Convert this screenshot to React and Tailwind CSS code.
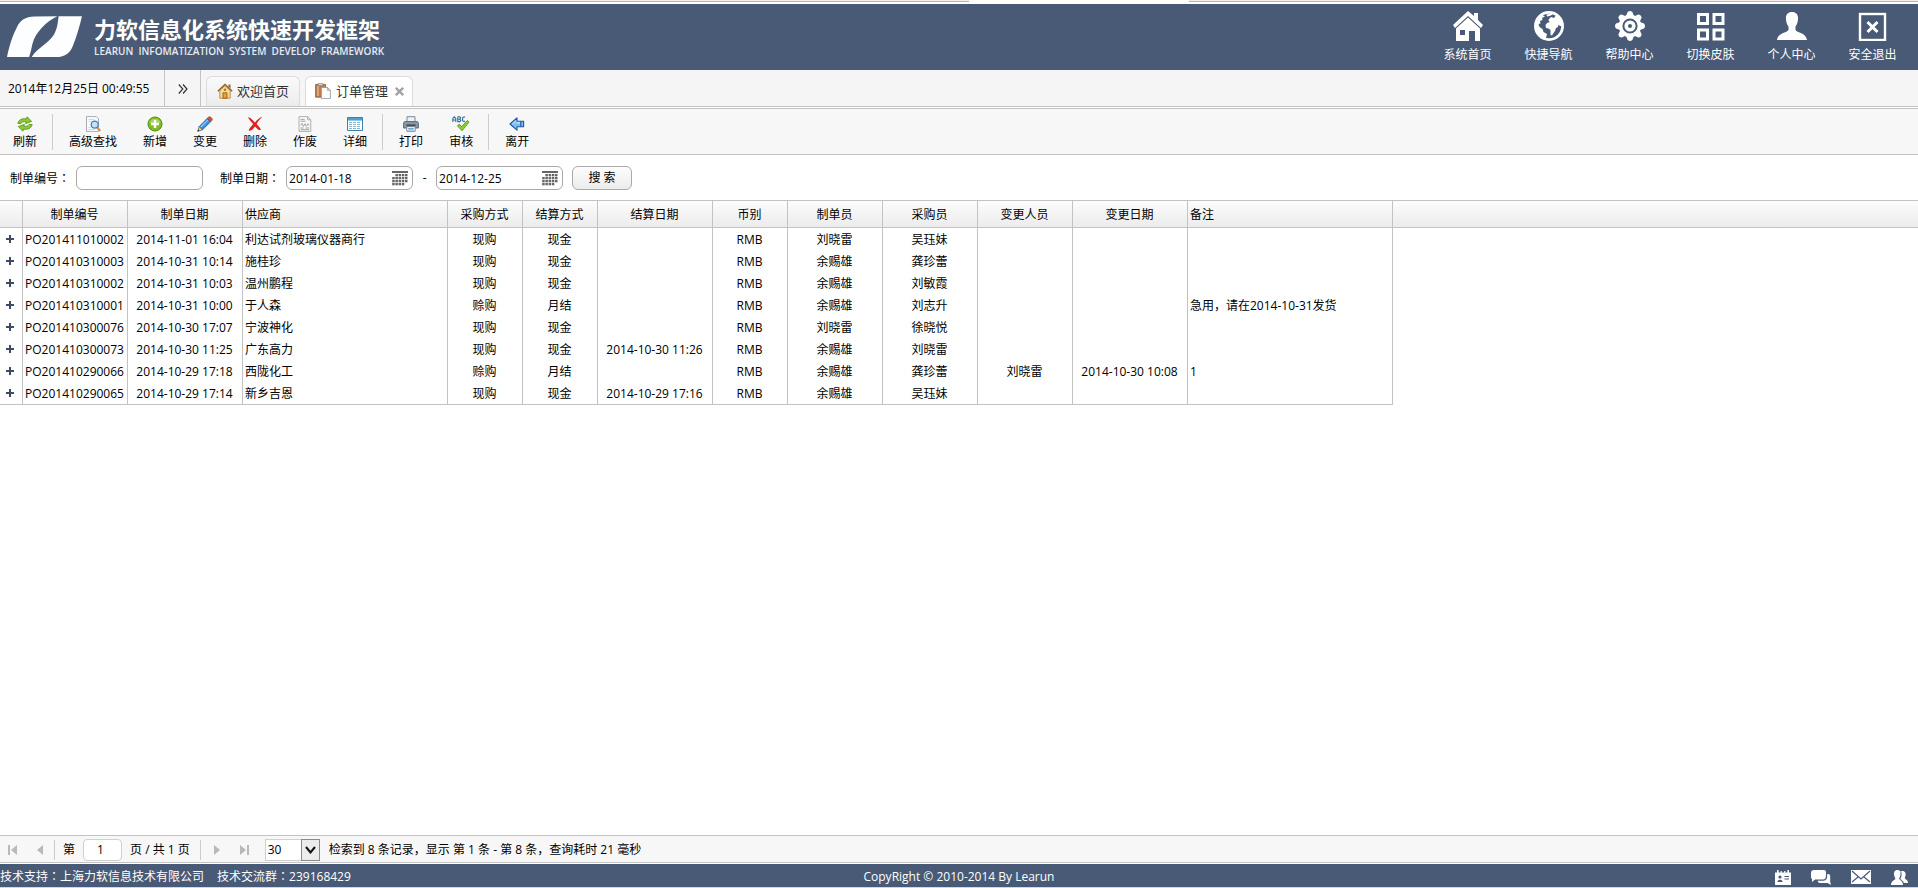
import React from "react";

/* ---------- header drawings ---------- */

const Logo = () => (
  <svg viewBox="0 0 224 124" className="h-[42px] w-[75px] shrink-0" aria-hidden="true">
    <path fill="#fdfeff" d="M0 122 C6 92 16 58 30 32 C40 12 54 2 82 1 L150 0 C118 16 86 46 76 82 C73 96 71 106 66 122 Z" />
    <path fill="#fdfeff" d="M224 0 L154 0 C152 20 150 40 138 58 C122 82 88 96 74 122 L146 122 C176 121 188 108 196 90 C208 62 216 32 224 0 Z" />
  </svg>
);

const HomeIcon = () => (
  <svg viewBox="0 0 30 30" className="h-[30px] w-[30px]" aria-hidden="true">
    <path fill="#fff" d="M15 0 L21 5 V2 H25 V9 L30 14 L28 17 L15 5 L2 17 L0 14 Z" />
    <path fill="#fff" d="M15 6.4 L27 17.5 V30 H22 V20 H16 V30 H3 V17.5 Z M7 19 V24 H12 V19 Z" fillRule="evenodd" />
  </svg>
);

const GlobeIcon = () => (
  <svg viewBox="0 0 30 30" className="h-[30px] w-[30px]" aria-hidden="true">
    <circle cx="15" cy="15" r="13.6" fill="#485a75" stroke="#fff" strokeWidth="2.8" />
    <path fill="#fff" d="M15 8 L17 6 L20 7 L22 4 L27 9 L28.5 15 L26 15 L24.5 13.5 L24 16 L22 17 L21 20 L19.5 22 L18 24.5 L16.5 24 L16.5 19 L14.5 17.5 L12 17 L11.5 14 L13 12 L16 11 L14.5 10 Z" />
    <path fill="#fff" d="M1.5 11 L5 5.5 L10 2 L9 4.5 L11 5.5 L8 7 L8.5 9 L6 10 L6.5 12.5 L4.5 13 L5.5 16 L8.5 18 L9.5 21 L13 23 L12 27 L8 27.5 L3 23 L1.2 17 Z" />
    <path fill="#fff" d="M12.5 3.5 L17 2.6 L19 3.6 L15.5 5 L13 5.4 Z" />
  </svg>
);

const GearIcon = () => (
  <svg viewBox="-15 -15 30 30" className="h-[30px] w-[30px]" aria-hidden="true">
    {[0, 45, 90, 135, 180, 225, 270, 315].map((a) => (
      <path key={a} fill="#fff" d="M-4.2 -9 L-2.4 -14 Q0 -16 2.4 -14 L4.2 -9 Z" transform={`rotate(${a})`} />
    ))}
    <circle r="11.2" fill="#fff" />
    <circle r="6.6" fill="none" stroke="#485a75" strokeWidth="2" />
    <circle r="2" fill="#485a75" />
  </svg>
);

const GridIcon = () => (
  <svg viewBox="0 0 30 30" className="h-[30px] w-[30px]" aria-hidden="true">
    <g fill="none" stroke="#fff" strokeWidth="3">
      <rect x="2.5" y="3.5" width="9" height="9" />
      <rect x="18" y="3.5" width="9" height="9" />
      <rect x="2.5" y="19" width="9" height="9" />
      <rect x="18" y="19" width="9" height="9" />
    </g>
  </svg>
);

const PersonIcon = () => (
  <svg viewBox="0 0 30 30" className="h-[30px] w-[30px]" aria-hidden="true">
    <path fill="#fff" d="M15 1 C19.5 1 21.5 4 21 8.5 C20.8 12 19.6 14 18.5 15.5 V19 C20 22 29 21.5 30 29 H0 C1 21.5 10 22 11.5 19 V15.5 C10.4 14 9.2 12 9 8.5 C8.5 4 10.5 1 15 1 Z" />
  </svg>
);

const ExitIcon = () => (
  <svg viewBox="0 0 30 30" className="h-[30px] w-[30px]" aria-hidden="true">
    <rect x="2" y="3" width="25" height="26" fill="none" stroke="#fff" strokeWidth="2.4" />
    <path d="M9.5 11 L19.5 21 M19.5 11 L9.5 21" stroke="#fff" strokeWidth="3" />
  </svg>
);

/* ---------- tab drawings ---------- */

const TabHome = () => (
  <svg viewBox="0 0 16 16" className="h-4 w-4" aria-hidden="true">
    <path fill="#a0622a" d="M11.5 1.5h2v4l-2-2z" />
    <path fill="#f6dc9c" stroke="#b0792c" strokeWidth=".8" d="M2.8 7.5 8 2.8l5.2 4.7v7.7H2.8z" />
    <path fill="none" stroke="#8a5a20" strokeWidth="1.3" d="M.8 8.2 8 1.4l7.2 6.8" />
    <path fill="#e8a23e" stroke="#8f4e12" strokeWidth=".8" d="M6 15.2V9.8h4v5.4z" />
    <circle cx="8" cy="6.8" r="1.2" fill="#c06d1e" />
  </svg>
);

const TabClipboard = () => (
  <svg viewBox="0 0 16 16" className="h-4 w-4" aria-hidden="true">
    <path fill="#bd7b4a" stroke="#8a5a38" strokeWidth=".8" d="M.6 1.4h10v12.8H.6z" />
    <path fill="#d9a57c" d="M2 3h2v10H2z" />
    <path fill="#d7dade" stroke="#7c7f85" strokeWidth=".6" d="M3.4.5h4.4v2H3.4z" />
    <path fill="#fdfdfe" stroke="#8d939c" strokeWidth=".8" d="M6.4 4.4h6l3 3v8.2h-9z" />
    <path fill="#d5dae1" stroke="#8d939c" strokeWidth=".6" d="M12.4 4.4v3h3z" />
  </svg>
);

/* ---------- toolbar drawings ---------- */

const ic = "h-4 w-4";

const Refresh = () => (
  <svg viewBox="0 0 16 16" className={ic} aria-hidden="true">
    <g fill="#8ccb2c" stroke="#4f8a12" strokeWidth=".8" strokeLinejoin="round">
      <path d="M.8 7.4C1.8 3.6 5.4 2 9.4 3L10.2.8 14.6 5.4 8.6 7.6 9.1 5.8C6.6 5.2 4.8 5.8 4 7.6Z" />
      <path d="M15.2 8.6C14.2 12.4 10.6 14 6.6 13L5.8 15.2 1.4 10.6 7.4 8.4 6.9 10.2C9.4 10.8 11.2 10.2 12 8.4Z" />
    </g>
  </svg>
);

const Find = () => (
  <svg viewBox="0 0 16 16" className={ic} aria-hidden="true">
    <path fill="#fbfcfe" stroke="#9aa4b2" strokeWidth=".9" d="M1.5.6h9.8l2.2 2.2v12.6h-12z" />
    <path stroke="#c9d0da" strokeWidth=".8" d="M3.5 3.5h6M3.5 5.5h3M3.5 11.5h3M3.5 13.4h6" />
    <path stroke="#d59654" strokeWidth="2.4" strokeLinecap="round" d="M12.4 11.8l2.2 2.4" />
    <circle cx="9.7" cy="8.6" r="3.5" fill="#c3e4f8" stroke="#3d7fb8" strokeWidth="1.3" />
  </svg>
);

const Add = () => (
  <svg viewBox="0 0 16 16" className={ic} aria-hidden="true">
    <circle cx="8" cy="8" r="7" fill="#7fbd25" stroke="#4d8a14" strokeWidth="1" />
    <path d="M2.4 7a5.7 5.2 0 0 1 11.2 0z" fill="#a5d65a" />
    <path stroke="#fff" strokeWidth="2.4" d="M8 4v8M4 8h8" />
  </svg>
);

const Edit = () => (
  <svg viewBox="0 0 16 16" className={ic} aria-hidden="true">
    <path fill="#3d8fdb" stroke="#1f5795" strokeWidth=".8" d="M2.2 10.6 10.2 2.4 13.6 5.8 5.4 13.8Z" />
    <path stroke="#9bcdf6" strokeWidth="1.1" d="M3.8 11 11 3.8" />
    <path fill="#d0533c" stroke="#8e3324" strokeWidth=".7" d="M11.4 1.3Q12.6.1 13.8 1.3L14.8 2.3Q15.8 3.4 14.8 4.6L13.6 5.8 10.2 2.4Z" />
    <path fill="#f1d3a4" stroke="#4a4a4a" strokeWidth=".7" d="M2.2 10.6.7 15.3 5.4 13.8Z" />
    <path fill="#222" d="M1.2 13.6.6 15.4l1.9-.6z" />
  </svg>
);

const Delete = () => (
  <svg viewBox="0 0 16 16" className={ic} aria-hidden="true">
    <path fill="#dd2222" d="M1 1.2C3.4 1 5.8 4.4 8 6.4 10 4 12.6 1.4 15.4.8 12.8 3 11 5.4 9.6 8 11.4 10 13.4 12 14 13.8 12 15 10 12.6 8 10.4 6 13 4.4 15 2 14.8 1 13.6 4 10.6 6.2 8 4.4 6 2 3.4 1 1.2Z" />
  </svg>
);

const Void = () => (
  <svg viewBox="0 0 16 16" className={ic} aria-hidden="true">
    <path fill="#f7f7f7" stroke="#a8a8a8" strokeWidth=".9" d="M2 .6h8.6l3.2 3.2v11.6H2z" />
    <path fill="none" stroke="#a8a8a8" strokeWidth=".9" d="M10.6.6v3.2h3.2" />
    <path fill="none" stroke="#9b9b9b" strokeWidth=".9" d="M3.6 3.4h4M3.6 5.2h5M3.4 9.4l1.6-2 1.4 3 1.6-2.6 1.5 2.4 1.5-2.4 1.4 1.4M3.6 12h3M8.6 12h3.6M3.6 13.7h8.6" />
  </svg>
);

const Detail = () => (
  <svg viewBox="0 0 16 16" className={ic} aria-hidden="true">
    <path fill="#fff" stroke="#3c7fae" strokeWidth="1" d="M.5 1.5h15v13H.5z" />
    <path fill="#4d9fd2" d="M1 2h14v2.6H1z" />
    <path stroke="#8fb4cd" strokeWidth="1" strokeDasharray="3 1" d="M2 6.5h12M2 8.5h12M2 10.5h12M2 12.5h12" />
  </svg>
);

const Print = () => (
  <svg viewBox="0 0 16 16" className={ic} aria-hidden="true">
    <path fill="#e9f1fa" stroke="#6f7d8c" strokeWidth=".9" d="M4 .7h8v5.6H4z" />
    <path fill="#8b97a4" stroke="#56616d" strokeWidth=".9" d="M1.6 5.6h12.8l1 1.4v5H.6V7z" />
    <path fill="#444e59" d="M3.4 8.4h9.2v1.6H3.4z" />
    <path fill="#fff" stroke="#6f7d8c" strokeWidth=".9" d="M3.8 10.6h8.4v4.7H3.8z" />
    <path stroke="#5da0dc" strokeWidth="1" d="M5.2 12.4h5.6M5.2 13.9h5.6" />
  </svg>
);

const Audit = () => (
  <svg viewBox="0 0 18 16" className="h-4 w-[18px]" aria-hidden="true">
    <g fill="none" stroke="#2f6f9f" strokeWidth="1.1">
      <path d="M.8 6V2.4L2.3.8l1.5 1.6V6M.8 4h3" />
      <path d="M5.8.8h2l.8 1-.8 1.4h-2V.8V5.6h2.2l.8-1.2-1-1.2" />
      <path d="M13 1.3 12 .8l-1.4.9v3l1.4.9 1-.5" />
    </g>
    <path fill="#8fce2e" stroke="#4f8a12" strokeWidth=".8" strokeLinejoin="round" d="M5.4 9.8 7.2 8.2 9.8 10.6 15.4 4.4 17 6 10 14.8Z" />
  </svg>
);

const Leave = () => (
  <svg viewBox="0 0 16 16" className={ic} aria-hidden="true">
    <path fill="#7fbdf5" stroke="#1f55a8" strokeWidth="1.1" strokeLinejoin="round" d="M1 8 8 1.8V5.2H14.6V10.8H8V14.2Z" />
    <path stroke="#e0f0fd" strokeWidth="1" d="M3.4 8 7 4.8M7.4 6.8h3.6" />
    <path stroke="#1f55a8" strokeWidth="1.1" d="M11.8 5.2v5.6" />
  </svg>
);

const CalendarGrid = () => (
  <svg viewBox="0 0 16 15" className="h-[15px] w-4" aria-hidden="true">
    <path fill="#666" d="M0 0h16v2H0z" />
    {[3, 6, 9, 12].map((y, r) =>
      [0.2, 3.4, 6.6, 9.8, 13].map((x, c) =>
        (r === 0 && c === 0) || (r === 3 && c === 4) ? null : (
          <rect key={`${x}-${y}`} x={x} y={y} width="2.5" height="2.3" fill="#666" />
        )
      )
    )}
  </svg>
);

/* ---------- data ---------- */

const NAV = [
  ["系统首页", HomeIcon],
  ["快捷导航", GlobeIcon],
  ["帮助中心", GearIcon],
  ["切换皮肤", GridIcon],
  ["个人中心", PersonIcon],
  ["安全退出", ExitIcon],
];

const TOOLS = [
  [["刷新", Refresh]],
  [["高级查找", Find], ["新增", Add], ["变更", Edit], ["删除", Delete], ["作废", Void], ["详细", Detail]],
  [["打印", Print], ["审核", Audit]],
  [["离开", Leave]],
];

const COLUMNS = [
  { title: "制单编号", col: "w-[105px]" },
  { title: "制单日期", col: "w-[115px]" },
  { title: "供应商", col: "w-[205px]", left: true },
  { title: "采购方式", col: "w-[75px]" },
  { title: "结算方式", col: "w-[75px]" },
  { title: "结算日期", col: "w-[115px]" },
  { title: "币别", col: "w-[75px]" },
  { title: "制单员", col: "w-[95px]" },
  { title: "采购员", col: "w-[95px]" },
  { title: "变更人员", col: "w-[95px]" },
  { title: "变更日期", col: "w-[115px]" },
  { title: "备注", col: "w-[205px]", left: true },
];

const ROWS = [
  ["PO201411010002", "2014-11-01 16:04", "利达试剂玻璃仪器商行", "现购", "现金", "", "RMB", "刘晓雷", "吴珏妹", "", "", ""],
  ["PO201410310003", "2014-10-31 10:14", "施桂珍", "现购", "现金", "", "RMB", "余赐雄", "龚珍蕾", "", "", ""],
  ["PO201410310002", "2014-10-31 10:03", "温州鹏程", "现购", "现金", "", "RMB", "余赐雄", "刘敏霞", "", "", ""],
  ["PO201410310001", "2014-10-31 10:00", "于人森", "赊购", "月结", "", "RMB", "余赐雄", "刘志升", "", "", "急用，请在2014-10-31发货"],
  ["PO201410300076", "2014-10-30 17:07", "宁波神化", "现购", "现金", "", "RMB", "刘晓雷", "徐晓悦", "", "", ""],
  ["PO201410300073", "2014-10-30 11:25", "广东高力", "现购", "现金", "2014-10-30 11:26", "RMB", "余赐雄", "刘晓雷", "", "", ""],
  ["PO201410290066", "2014-10-29 17:18", "西陇化工", "赊购", "月结", "", "RMB", "余赐雄", "龚珍蕾", "刘晓雷", "2014-10-30 10:08", "1"],
  ["PO201410290065", "2014-10-29 17:14", "新乡吉恩", "现购", "现金", "2014-10-29 17:16", "RMB", "余赐雄", "吴珏妹", "", "", ""],
];

/* ---------- parts ---------- */

/* Full-width colon centred in its box. */
const Colon = () => <span className="font-['Noto_Sans_CJK_TC',sans-serif]">：</span>;

function BrowserStrip() {
  return (
    <div className="flex h-1 shrink-0 bg-white" aria-hidden="true">
      <div className="h-0.5 flex-1 border-b border-[#b9b3b1] bg-[#f4eeee]" />
      <div className="w-[220px]" />
      <div className="h-0.5 w-[729px] border-b border-[#b9b3b1] bg-[#f4eeee]" />
    </div>
  );
}

function Header() {
  return (
    <header className="flex h-[66px] shrink-0 items-center justify-between bg-[#485a75] pr-[5px] pl-[7px] text-white">
      <div className="flex items-center gap-3">
        <Logo />
        <div className="pb-[3px]">
          <h1 className="text-[22px] leading-[30px] font-bold">力软信息化系统快速开发框架</h1>
          <p className="text-[10px] leading-[14px] font-semibold whitespace-pre text-[#e6ebf2]">
            {"LEARUN  INFOMATIZATION  SYSTEM  DEVELOP  FRAMEWORK"}
          </p>
        </div>
      </div>
      <nav className="flex">
        {NAV.map(([label, Icon]) => (
          <a key={label} href="#" className="flex w-[81px] flex-col items-center gap-[5px]">
            <Icon />
            <span className="leading-[18px]">{label}</span>
          </a>
        ))}
      </nav>
    </header>
  );
}

function TabBar() {
  return (
    <div className="flex h-[37px] shrink-0 items-stretch border-b border-[#c3c3c3] bg-[#f5f5f5]">
      <time className="flex w-[165px] items-center border-r border-[#c3c3c3] pt-[2px] pl-2">2014年12月25日 00:49:55</time>
      <button type="button" aria-label="展开" className="flex w-9 items-center justify-center border-r border-[#c3c3c3] pt-[2px]">
        <svg viewBox="0 0 10 10" className="h-[10px] w-[10px]" fill="none" stroke="#333" strokeWidth="1.2" aria-hidden="true">
          <path d="M.8.5 4.8 5 .8 9.5M5 .5 9 5 5 9.5" />
        </svg>
      </button>
      <div className="flex items-end gap-[5px] pl-[5px] text-[13px] text-[#333]">
        <button type="button" className="flex h-[30px] items-center gap-1 rounded-t-md border border-b-0 border-[#dcdcdc] bg-linear-to-b from-[#fafafa] to-[#ececec] px-[10px] pb-px">
          <TabHome />
          欢迎首页
        </button>
        <div className="flex h-[30px] items-center gap-[7px] rounded-t-md border border-b-0 border-[#dcdcdc] bg-white pr-2 pb-px pl-[9px]">
          <button type="button" className="flex items-center gap-[5px]">
            <TabClipboard />
            订单管理
          </button>
          <button type="button" aria-label="关闭">
            <svg viewBox="0 0 9 9" className="h-[9px] w-[9px]" stroke="#a3a3a3" strokeWidth="2.4" aria-hidden="true">
              <path d="M.8.8 8.2 8.2M8.2.8.8 8.2" />
            </svg>
          </button>
        </div>
      </div>
    </div>
  );
}

function Toolbar() {
  return (
    <div className="mt-px flex h-[47px] shrink-0 items-center border-y border-[#c3c3c3] bg-[#f7f7f7]">
      {TOOLS.map((group, g) => (
        <React.Fragment key={g}>
          {g > 0 && <div className="mr-[3px] ml-0.5 h-9 w-px bg-[#cccccc]" />}
          {group.map(([label, Icon]) => (
            <button key={label} type="button" className="flex flex-col items-center px-[13px] pt-1">
              <Icon />
              <span className="leading-5">{label}</span>
            </button>
          ))}
        </React.Fragment>
      ))}
    </div>
  );
}

const fieldBox = "flex h-6 w-[127px] items-center rounded-md border border-[#a9a9a9] bg-white";

function DateField({ id, label, value }) {
  return (
    <div className={fieldBox}>
      <input id={id} type="text" aria-label={label} defaultValue={value} className="h-full min-w-0 flex-1 rounded-md pl-[2px] outline-none" />
      <button type="button" aria-label="选择日期" className="pr-1">
        <CalendarGrid />
      </button>
    </div>
  );
}

function SearchBar() {
  return (
    <form className="flex h-[45px] shrink-0 items-center pt-px pl-[10px]" onSubmit={(e) => e.preventDefault()}>
      <label htmlFor="order-no" className="mr-[6px]">制单编号<Colon /></label>
      <div className={fieldBox}>
        <input id="order-no" type="text" className="h-full w-full rounded-md px-1 outline-none" />
      </div>
      <label htmlFor="date-from" className="mr-[6px] ml-[17px]">制单日期<Colon /></label>
      <DateField id="date-from" label="制单日期起" value="2014-01-18" />
      <span className="w-[23px] text-center">-</span>
      <DateField id="date-to" label="制单日期止" value="2014-12-25" />
      <button type="submit" className="ml-[9px] h-6 w-[60px] rounded-md border border-[#a9a9a9] bg-linear-to-b from-[#fdfdfd] to-[#ececec]">
        搜 索
      </button>
    </form>
  );
}

function OrdersTable() {
  return (
    <table className="w-full table-fixed border-separate border-spacing-0">
      <colgroup>
        <col className="w-[23px]" />
        {COLUMNS.map((c) => (
          <col key={c.title} className={c.col} />
        ))}
        <col />
      </colgroup>
      <thead>
        <tr className="h-7 bg-linear-to-b from-[#fdfdfd] to-[#ebebeb]">
          <th className="border-y border-r border-[#c3c3c3] p-0" aria-label="展开" />
          {COLUMNS.map((c) => (
            <th
              key={c.title}
              scope="col"
              className={`border-y border-r border-[#c3c3c3] pt-[2px] font-normal ${c.left ? "pl-[2px] text-left" : "pr-px text-center"}`}
            >
              {c.title}
            </th>
          ))}
          <th className="border-y border-[#c3c3c3] p-0" aria-hidden="true" />
        </tr>
      </thead>
      <tbody>
        {ROWS.map((row, r) => {
          const last = r === ROWS.length - 1;
          const edge = last ? "border-b" : "";
          return (
            <tr key={row[0]} className={last ? "h-[23px]" : "h-[22px]"}>
              <td className={`border-r border-[#c3c3c3] p-0 ${edge}`}>
                <button type="button" aria-label="展开明细" className="flex w-5 justify-center">
                  <svg viewBox="0 0 8 8" className="h-2 w-2" stroke="#3d4b66" strokeWidth="2" aria-hidden="true">
                    <path d="M4 0V8M0 4H8" />
                  </svg>
                </button>
              </td>
              {row.map((cell, i) => (
                <td
                  key={i}
                  className={`overflow-hidden border-r border-[#c3c3c3] pt-[2px] whitespace-nowrap ${edge} ${
                    COLUMNS[i].left ? "pl-[2px] text-left" : "pr-px text-center"
                  }`}
                >
                  {cell}
                </td>
              ))}
              <td className="p-0" />
            </tr>
          );
        })}
      </tbody>
    </table>
  );
}

function PageArrow({ label, flip, edge }) {
  return (
    <button type="button" aria-label={label} disabled className="flex w-[26px] justify-center">
      <svg viewBox="0 0 10 10" className={`h-[10px] w-[10px] ${flip ? "rotate-180" : ""}`} fill="#b9b9b9" aria-hidden="true">
        {edge && <path d="M0 0h2v10H0z" />}
        <path d="M9 0v10L3 5z" />
      </svg>
    </button>
  );
}

function Pager() {
  return (
    <div className="flex h-7 shrink-0 items-center border-y border-[#c3c3c3] bg-[#f7f7f7] pt-px">
      <PageArrow label="首页" edge />
      <PageArrow label="上一页" />
      <div className="mr-2 ml-0.5 h-5 w-px bg-[#cccccc]" />
      <label htmlFor="page-no">第</label>
      <input id="page-no" type="text" defaultValue="1" className="mx-2 h-[22px] w-[39px] rounded border border-[#d0d0d0] bg-white pr-2 pl-1 text-center outline-none" />
      <span>页 / 共 1 页</span>
      <div className="mr-1 ml-[10px] h-5 w-px bg-[#cccccc]" />
      <PageArrow label="下一页" flip />
      <PageArrow label="末页" flip edge />
      <div className="relative ml-2 h-[22px] w-[55px]">
        <select aria-label="每页条数" defaultValue="30" className="h-full w-full appearance-none border border-[#d0d0d0] bg-white pl-[2px] outline-none">
          <option>30</option>
          <option>50</option>
          <option>100</option>
        </select>
        <span className="pointer-events-none absolute top-0 right-0 flex h-[22px] w-[19px] items-center justify-center border border-[#8a8a8a] bg-[#ececec]">
          <svg viewBox="0 0 11 8" className="h-2 w-[11px]" fill="none" stroke="#111" strokeWidth="2" aria-hidden="true">
            <path d="M1 1 5.5 6.5 10 1" />
          </svg>
        </span>
      </div>
      <p className="pl-[9px]">检索到 8 条记录，显示 第 1 条 - 第 8 条，查询耗时 21 毫秒</p>
    </div>
  );
}

function Footer() {
  return (
    <footer className="mt-px grid h-[23px] shrink-0 grid-cols-3 items-center bg-[#485a75] pt-[2px] text-white">
      <p className="flex gap-[13px]">
        <span>技术支持<Colon />上海力软信息技术有限公司</span>
        <span>技术交流群<Colon />239168429</span>
      </p>
      <p className="text-center">CopyRight © 2010-2014 By Learun</p>
      <div className="flex items-center justify-end gap-5 pt-px pr-[10px]">
        <a href="#" aria-label="名片">
          <svg viewBox="0 0 16 15" className="h-[15px] w-4" aria-hidden="true">
            <path fill="#fff" d="M0 2.5h2V0h1.6v2.5h2V1h1.2v1.5h2.4V1h1.2v1.5h2V0H14v2.5h2V15H0z" />
            <circle cx="5" cy="7" r="1.6" fill="#485a75" />
            <path fill="#485a75" d="M2.4 12c0-3 5.2-3 5.2 0zM9.5 6h4.5v1H9.5zM9.5 8.5h4.5v1H9.5z" />
          </svg>
        </a>
        <a href="#" aria-label="会话">
          <svg viewBox="0 0 20 16" className="h-4 w-5" aria-hidden="true">
            <path fill="#fff" d="M3 1h10q2 0 2 2v3q0 4.600-3 4.600H4L1 13v-3Q0 9.500 0 8V4q0-3 3-3z" />
            <path fill="#fff" d="M16.200 5h1q2 0 2 2v6l.8 3-3.400-2H9q-2 0-2.400-2.200h6q3.600-.4 3.600-5z" />
          </svg>
        </a>
        <a href="#" aria-label="邮件">
          <svg viewBox="0 0 20 14" className="h-[14px] w-5" aria-hidden="true">
            <path fill="#fff" d="M0 0h20v14H0z" />
            <path fill="none" stroke="#485a75" strokeWidth="1.2" d="M1 1l9 8 9-8M1 12l6-5M19 12l-6-5" />
          </svg>
        </a>
        <a href="#" aria-label="用户">
          <svg viewBox="0 0 17 15" className="h-[15px] w-[17px]" aria-hidden="true">
            <path fill="#fff" d="M11 1c3 0 4 2 3.600 4.400L13.800 8c.4 1.600 3.200 1.600 3.200 5h-4.600c-.4-2-1.800-3-3.400-3.600C10.600 7 10.600 3 8.600 1.800z" />
            <path fill="#fff" d="M6.400 0C9.400 0 10 2.400 9.600 5 9.300 6.800 8.600 7.600 8.200 8.400 8.600 10.400 12 10.400 12 15H0c0-4.600 4-4.600 4.400-6.600C4 7.600 3.400 6.800 3.100 5 2.800 2.400 3.400 0 6.400 0z" />
            <path fill="none" stroke="#485a75" strokeWidth=".8" d="M9.900 1.800c.8 2.600.2 5-1 6.800.6 1.600 3.600 1.800 3.800 6" />
          </svg>
        </a>
      </div>
    </footer>
  );
}

export default function App() {
  return (
    <div className="flex min-h-screen flex-col bg-white font-['Open_Sans','Noto_Sans_CJK_SC',sans-serif] text-[12px] leading-[18px] text-black">
      <BrowserStrip />
      <Header />
      <TabBar />
      <Toolbar />
      <main className="flex flex-1 flex-col">
        <SearchBar />
        <OrdersTable />
      </main>
      <Pager />
      <Footer />
      <div className="h-px shrink-0 bg-[#c5d9f1]" />
    </div>
  );
}
